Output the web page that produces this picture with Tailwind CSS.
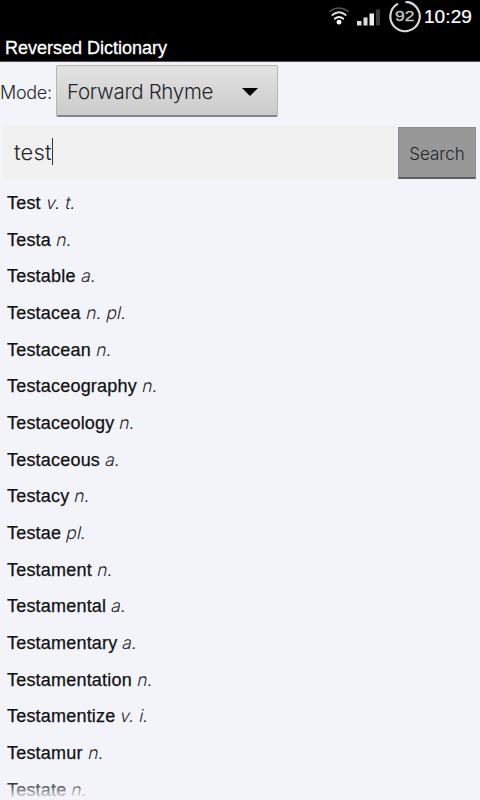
<!DOCTYPE html>
<html lang="en">
<head>
<meta charset="utf-8">
<title>Reversed Dictionary</title>
<script src="https://cdn.jsdelivr.net/npm/@tailwindcss/browser@4"></script>
</head>
<body class="w-[480px] h-[800px] overflow-hidden bg-[#f2f4fa] text-[#242528] font-['Liberation_Sans',Arial,sans-serif]">
<div class="relative h-full flex flex-col overflow-hidden">
  <header class="h-[62px] shrink-0 bg-black text-white border-b border-[#555157]">
    <div class="h-[33px] flex justify-end items-center pr-2">
      <svg class="w-5 h-5 mr-[8px]" viewBox="0 0 20 20" fill="none" stroke-linecap="round">
        <path d="M1 4.200Q10-2 19 4.200" stroke="#555" stroke-width="1.5"/>
        <path d="M3.3 8Q10 2.500 16.700 8" stroke="#ddd" stroke-width="1.8"/>
        <path d="M5.700 11.700Q10 8.200 14.300 11.700" stroke="#eee" stroke-width="1.800"/>
        <circle cx="10" cy="15.200" r="2.400" fill="#fff"/>
      </svg>
      <svg class="w-6 h-5 mr-[8px]" viewBox="0 0 24 20">
        <path d="M0 14h4.500v4.500H0z" fill="#ddd"/><path d="M6.500 10.500h4v8h-4z" fill="#ddd"/><path d="M12.500 6.500h4.500v12h-4.500z" fill="#eee"/><path d="M19 2.500h4v16h-4z" fill="#393939"/>
      </svg>
      <div class="relative w-8 h-8 mr-[3px] flex items-center justify-center">
        <svg class="absolute inset-0 w-8 h-8" viewBox="0 0 32 32" fill="none" stroke-width="2.200"><path d="M16.500 .8A14.700 14.700 0 1 1 9 2.600" stroke="#d8d8d8"/></svg>
        <span class="relative text-[14px] leading-8 -top-px text-[#c4c4c4] scale-x-125 [-webkit-text-stroke:.3px_#c4c4c4]">92</span>
      </div>
      <span class="text-[19px] leading-8 tracking-[.1px] [-webkit-text-stroke:.2px_white]">10:29</span>
    </div>
    <h1 class="pl-[5px] text-[18px] leading-[30px] [-webkit-text-stroke:.3px_white]">Reversed Dictionary</h1>
  </header>
  <div class="h-[56px] shrink-0 mt-[3px] flex items-start">
    <span class="w-[56px] text-[18px] leading-[55px] tracking-[-.3px] font-light font-['Inter','Liberation_Sans',sans-serif]">Mode:</span>
    <div class="w-[222px] h-[52px] rounded-[2px] border border-[#b5b5b7] border-b-2 border-b-[#858588] bg-linear-to-b from-[#e3e3e3] to-[#cbcbcb] flex items-center justify-between pl-[10px] pr-[19px]">
      <span class="text-[20.5px] leading-8 pt-[2px] tracking-[-.3px] font-light font-['Inter','Liberation_Sans',sans-serif]">Forward Rhyme</span>
      <svg class="w-4 h-2 mt-[3px]" viewBox="0 0 16 8"><path d="M0 0h16L8 8z" fill="#000"/></svg>
    </div>
  </div>
  <div class="h-[62px] shrink-0 pt-1 flex gap-[3px]">
    <div class="w-[393px] h-[55px] ml-[2px] bg-[#f1f1f2] flex items-center pl-3">
      <span class="text-[22px] tracking-[.2px] font-light font-['Inter','Liberation_Sans',sans-serif]">test</span><i class="w-px h-[27px] -mt-[3px] bg-[#333]"></i>
    </div>
    <div class="w-[78px] h-[52px] mt-[2px] pt-[4px] rounded-[1px] border border-[#8b8b8c] border-b-2 border-b-[#5d5d60] bg-[#989898] flex items-center justify-center text-[17px] font-light font-['Inter','Liberation_Sans',sans-serif]">Search</div>
  </div>
  <ul id="list" class="pl-[7px] text-[18px]"></ul>
  <div class="absolute bottom-0 inset-x-0 h-5 bg-linear-to-b from-[#f2f4fa]/0 to-[#f2f4fa]"></div>
</div>
<script>
const words=[["Test","v. t."],["Testa","n."],["Testable","a."],["Testacea","n. pl."],["Testacean","n."],["Testaceography","n."],["Testaceology","n."],["Testaceous","a."],["Testacy","n."],["Testae","pl."],["Testament","n."],["Testamental","a."],["Testamentary","a."],["Testamentation","n."],["Testamentize","v. i."],["Testamur","n."],["Testate","n."]];
document.getElementById("list").innerHTML=words.map(([w,p])=>`<li class="h-[36.67px] leading-[40px] whitespace-nowrap flex gap-[6px]"><b class="font-normal tracking-[.2px] text-[#101113] [-webkit-text-stroke:.25px_#101113]">${w}</b><span class="inline-block text-[17.5px] -skew-x-12 font-light font-['Inter','Liberation_Sans',sans-serif]">${p}</span></li>`).join("");
</script>
</body>
</html>
